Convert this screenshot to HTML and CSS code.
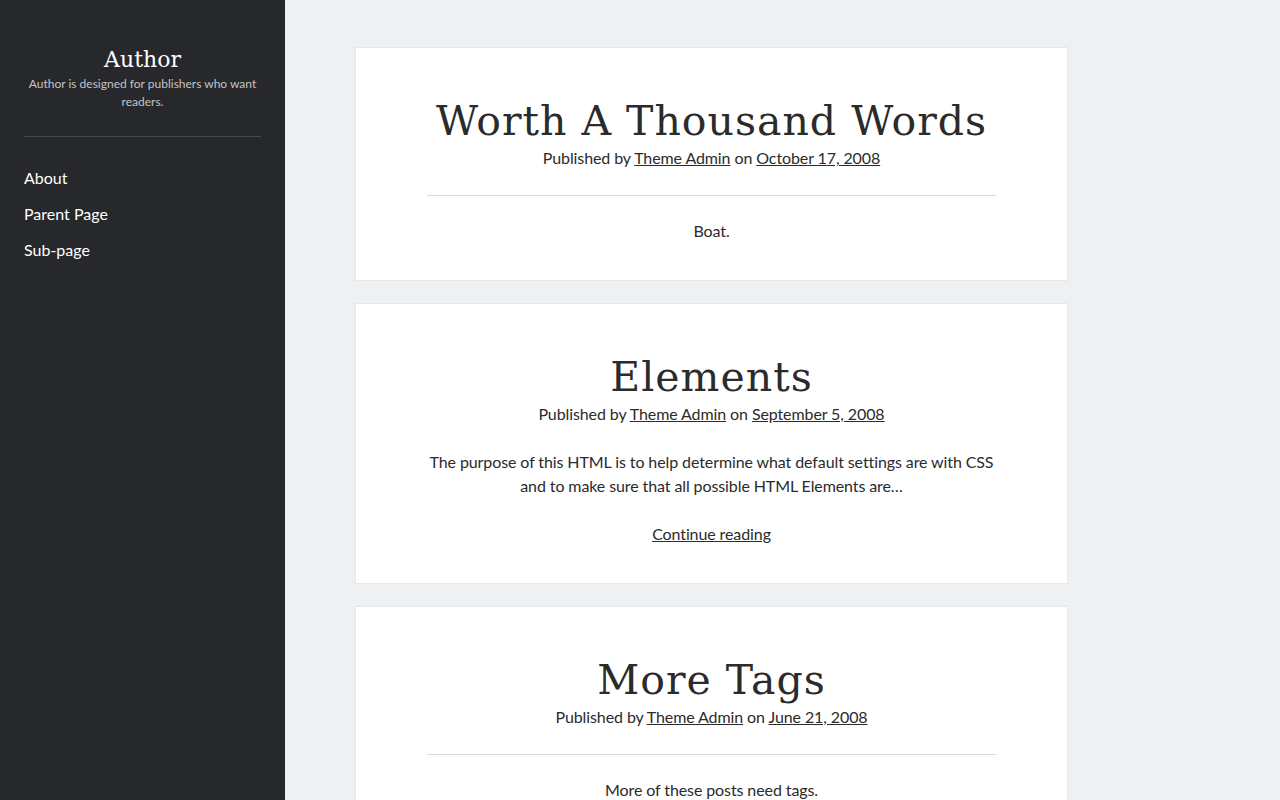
FILE: index.html
```html
<!DOCTYPE html>
<html lang="en">

<head>
    <meta charset="UTF-8">
    <meta name="viewport" content="width=device-width, initial-scale=1.0">
    <title>Author</title>

    <link rel="stylesheet" href="styles.css">
</head>

<body>
    <div class="layout">
        <header class="sidebar">
            <div class="site-branding">
                <h1 class="site-title"><a href="#">Author</a></h1>
                <p class="tagline">Author is designed for publishers who want readers.</p>
            </div>

            <nav class="menu">
                <ul>
                    <li><a href="#">About</a></li>
                    <li><a href="#">Parent Page</a></li>
                    <li><a href="#">Sub-page</a></li>
                </ul>
            </nav>
        </header>

        <main class="main">
            <article class="entry">
                <div class="entry-header">
                    <h2 class="entry-title"><a href="#">Worth A Thousand Words</a></h2>
                    <p class="entry-meta">Published by <a href="#">Theme Admin</a> on <a href="#">October 17, 2008</a></p>
                </div>
                <div class="entry-content with-rule">
                    <p>Boat.</p>
                </div>
            </article>

            <article class="entry">
                <div class="entry-header">
                    <h2 class="entry-title"><a href="#">Elements</a></h2>
                    <p class="entry-meta">Published by <a href="#">Theme Admin</a> on <a href="#">September 5, 2008</a></p>
                </div>
                <div class="entry-content">
                    <p>The purpose of this HTML is to help determine what default settings are with CSS and to make sure that all possible HTML Elements are&hellip;</p>
                    <p><a class="more-link" href="#">Continue reading</a></p>
                </div>
            </article>

            <article class="entry">
                <div class="entry-header">
                    <h2 class="entry-title"><a href="#">More Tags</a></h2>
                    <p class="entry-meta">Published by <a href="#">Theme Admin</a> on <a href="#">June 21, 2008</a></p>
                </div>
                <div class="entry-content with-rule">
                    <p>More of these posts need tags.</p>
                </div>
            </article>
        </main>
    </div>
</body>

</html>
```

FILE: styles.css
```css
* {
    box-sizing: border-box;
}

body {
    margin: 0;
    background: #eff0f2;
    color: #2b2b2b;
    font-family: Lato, "Open Sans", sans-serif;
    font-size: 16px;
    line-height: 1.5;
}

a {
    color: inherit;
}

.layout {
    display: flex;
    min-height: 100vh;
}

/* left column */
.sidebar {
    flex: 0 0 285px;
    background: #27282b;
    color: #fff;
    padding: 45px 24px;
}

.site-branding {
    text-align: center;
    padding-bottom: 25px;
    border-bottom: 1px solid #48494c;
}

.site-title {
    margin: 0;
    font-family: "DejaVu Serif", serif;
    font-size: 22px;
    font-weight: normal;
    line-height: 30px;
}

.site-title a {
    text-decoration: none;
}

.tagline {
    margin: 0;
    font-size: 12px;
    line-height: 18px;
    color: #c4c4c5;
}

.menu ul {
    list-style: none;
    margin: 23px 0 0;
    padding: 0;
}

.menu li {
    line-height: 36px;
}

.menu a {
    text-decoration: none;
}

/* posts */
.main {
    flex: 1;
    padding: 47px 212px 0 70px;
}

.entry {
    background: #fff;
    border: 1px solid #e6e7e9;
    margin-bottom: 22px;
    padding: 48px 71px 37px;
    text-align: center;
    letter-spacing: -0.1px;
}

.entry-title {
    margin: 0;
    font-family: "DejaVu Serif", serif;
    font-size: 41px;
    font-weight: normal;
    line-height: 50px;
    letter-spacing: 1px;
}

.entry-title a {
    text-decoration: none;
}

.entry-meta {
    margin: 0;
    line-height: 24px;
}

.entry-content p {
    margin: 24px 0 0;
}

.with-rule {
    border-top: 1px solid #dadadb;
    margin-top: 25px;
}

.with-rule p {
    margin-top: 23px;
}
```
